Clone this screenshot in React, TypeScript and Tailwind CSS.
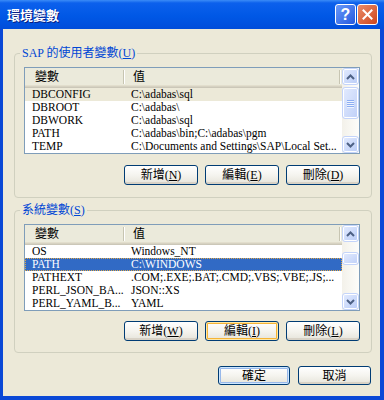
import React from 'react';

const ui = "font-['Liberation_Serif','Noto_Sans_CJK_TC',serif]";

type Row = { name: string; value: string };

const userVars: Row[] = [
  { name: 'DBCONFIG', value: 'C:\\adabas\\sql' },
  { name: 'DBROOT', value: 'C:\\adabas\\' },
  { name: 'DBWORK', value: 'C:\\adabas\\sql' },
  { name: 'PATH', value: 'C:\\adabas\\bin;C:\\adabas\\pgm' },
  { name: 'TEMP', value: 'C:\\Documents and Settings\\SAP\\Local Set...' },
];

const sysVars: Row[] = [
  { name: 'OS', value: 'Windows_NT' },
  { name: 'PATH', value: 'C:\\WINDOWS' },
  { name: 'PATHEXT', value: '.COM;.EXE;.BAT;.CMD;.VBS;.VBE;.JS;...' },
  { name: 'PERL_JSON_BA...', value: 'JSON::XS' },
  { name: 'PERL_YAML_B...', value: 'YAML' },
];

const Arrow = ({ up }: { up?: boolean }) => (
  <svg width="9" height="6" viewBox="0 0 9 6">
    <path
      d={up ? 'M1 5 L4.5 1.5 L8 5' : 'M1 1 L4.5 4.5 L8 1'}
      fill="none"
      stroke="#4D6185"
      strokeWidth="2"
    />
  </svg>
);

const scrollBtn =
  'w-[17px] h-[17px] flex items-center justify-center rounded-[3px] border border-[#C4D4FA] bg-linear-to-br from-[#E3EBFE] to-[#B9CCF7] shadow-[inset_0_0_0_1px_#FFFFFF]';

const ScrollBar = ({ thumbTop, thumbHeight, grip }: { thumbTop: number; thumbHeight: number; grip?: boolean }) => (
  <div className="w-[17px] flex flex-col bg-linear-to-r from-[#F3F1EA] to-[#FDFDFA]">
    <div className={scrollBtn}>
      <Arrow up />
    </div>
    <div
      className="rounded-[3px] border border-[#C4D4FA] bg-linear-to-br from-[#E3EBFE] to-[#BFD0F8] shadow-[inset_0_0_0_1px_#FFFFFF] flex flex-col items-center justify-center gap-[1px]"
      style={{ marginTop: thumbTop, height: thumbHeight }}
    >
      {grip &&
        [0, 1, 2, 3].map((i) => (
          <div key={i} className="w-[7px] h-[1px] bg-[#8DAEF3] shadow-[0_1px_0_#EEF4FE]" />
        ))}
    </div>
    <div className={`${scrollBtn} mt-auto`}>
      <Arrow />
    </div>
  </div>
);

const VarList = ({
  rows,
  selected,
  focused,
  thumbTop,
  thumbHeight,
  grip,
}: {
  rows: Row[];
  selected: number;
  focused?: boolean;
  thumbTop: number;
  thumbHeight: number;
  grip?: boolean;
}) => (
  <div className="flex h-[87px] border border-[#7F9DB9] bg-white">
    <div className="flex-1 min-w-0 flex flex-col">
      {/* header */}
      <div className="flex h-[20px] items-center bg-[#EBEADB] shadow-[inset_0_-1px_0_#CBC7B8,inset_0_-2px_0_#D6D2C2,inset_0_-3px_0_#E2DECD] text-[12px] text-black">
        <div className="w-[98px] pl-[10px] pb-[2px]">變數</div>
        <div className="w-[1px] h-[14px] bg-[#C7C5B2] shadow-[1px_0_0_#FFFFFF] mb-[2px]" />
        <div className="w-[215px] pl-[9px] pb-[2px]">值</div>
        <div className="w-[1px] h-[14px] bg-[#C7C5B2] shadow-[1px_0_0_#FFFFFF] mb-[2px]" />
      </div>
      {rows.map((r, i) => {
        const sel = i === selected;
        const cls = sel
          ? focused
            ? 'bg-[#316AC5] text-white outline-1 outline-dotted outline-[#E0A848] -outline-offset-1'
            : 'bg-[#ECE9D8] text-black'
          : 'text-black';
        return (
          <div key={r.name} className={`flex h-[13px] items-center text-[11.5px] leading-[13px] whitespace-nowrap ${cls}`}>
            <div className="w-[99px] pl-[7px] overflow-hidden">{r.name}</div>
            <div className="flex-1 pl-[7px] overflow-hidden">{r.value}</div>
          </div>
        );
      })}
    </div>
    <ScrollBar thumbTop={thumbTop} thumbHeight={thumbHeight} grip={grip} />
  </div>
);

const Button = ({
  label,
  accel,
  variant,
  className = 'w-[74px] h-[20px]',
}: {
  label: string;
  accel?: string;
  variant?: 'focus' | 'default';
  className?: string;
}) => {
  const ring =
    variant === 'focus'
      ? 'shadow-[inset_0_0_0_1px_#FFE8A6,inset_0_0_0_2px_#F5B437]'
      : variant === 'default'
      ? 'shadow-[inset_0_0_0_1px_#CEE7FF,inset_0_0_0_2px_#98B8EA]'
      : 'shadow-[inset_0_-2px_0_#D8D2C6]';
  return (
    <div
      className={`${className} flex items-center justify-center rounded-[3px] border border-[#003C74] bg-linear-to-b from-white via-[#F5F4EF] to-[#E6E4DA] text-[12px] leading-none text-black ${ring}`}
    >
      {label}
      {accel && (
        <>
          (<span className="underline">{accel}</span>)
        </>
      )}
    </div>
  );
};

const Group = ({
  title,
  accel,
  className,
  children,
}: {
  title: string;
  accel: string;
  className?: string;
  children: React.ReactNode;
}) => (
  <fieldset className={`border border-[#D0D0BF] rounded-[4px] ${className ?? ''}`}>
    <legend className="ml-[5px] px-[2px] text-[12px] leading-[16px] text-[#0046D5]">
      {title}(<span className="underline">{accel}</span>)
    </legend>
    <div className="pl-[9px] pr-[11px] pt-[6px]">{children}</div>
  </fieldset>
);

export default function App() {
  return (
    <div className={`w-[384px] h-[400px] flex flex-col bg-[#0A48D6] ${ui}`}>
      {/* Title bar */}
      <div className="h-[29px] flex items-center pl-[7px] pr-[6px] bg-[linear-gradient(180deg,#3B8CF7_0px,#0C60EC_3px,#0058E6_55%,#004DDA_100%)]">
        <div className="flex-1 text-white font-bold text-[13px] [text-shadow:1px_1px_0_#0A1C7E] font-['Noto_Sans_CJK_TC',sans-serif]">
          環境變數
        </div>
        <div className="flex gap-[1px]">
          <div className="w-[21px] h-[21px] rounded-[3px] border border-white bg-linear-to-br from-[#6A99F9] to-[#2357DE] flex items-center justify-center text-white font-bold text-[16px] leading-none font-['Liberation_Sans',sans-serif]">
            ?
          </div>
          <div className="w-[21px] h-[21px] rounded-[3px] border border-white bg-linear-to-br from-[#EA8B68] to-[#CC4418] flex items-center justify-center">
            <svg width="11" height="11" viewBox="0 0 11 11">
              <path d="M1.5 1.5 L9.5 9.5 M9.5 1.5 L1.5 9.5" stroke="white" strokeWidth="2" strokeLinecap="square" />
            </svg>
          </div>
        </div>
      </div>

      {/* Body */}
      <div className="flex-1 ml-[3px] mr-[4px] mb-[4px] bg-[#ECE9D8] pl-[11px] pr-[8px] flex flex-col">
        <Group title="SAP 的使用者變數" accel="U" className="mt-[16px]">
          <VarList rows={userVars} selected={0} thumbTop={2} thumbHeight={32} grip />
          <div className="flex justify-end gap-[7px] mt-[11px] pb-[12px]">
            <Button label="新增" accel="N" />
            <Button label="編輯" accel="E" />
            <Button label="刪除" accel="D" />
          </div>
        </Group>

        <Group title="系統變數" accel="S" className="mt-[4px]">
          <VarList rows={sysVars} selected={1} focused thumbTop={10} thumbHeight={13} />
          <div className="flex justify-end gap-[7px] mt-[10px] pb-[11px]">
            <Button label="新增" accel="W" />
            <Button label="編輯" accel="I" variant="focus" />
            <Button label="刪除" accel="L" />
          </div>
        </Group>

        <div className="flex justify-end gap-[8px] mt-[13px] pr-[1px]">
          <Button label="確定" variant="default" className="w-[72px] h-[19px]" />
          <Button label="取消" className="w-[73px] h-[19px]" />
        </div>
      </div>
    </div>
  );
}
